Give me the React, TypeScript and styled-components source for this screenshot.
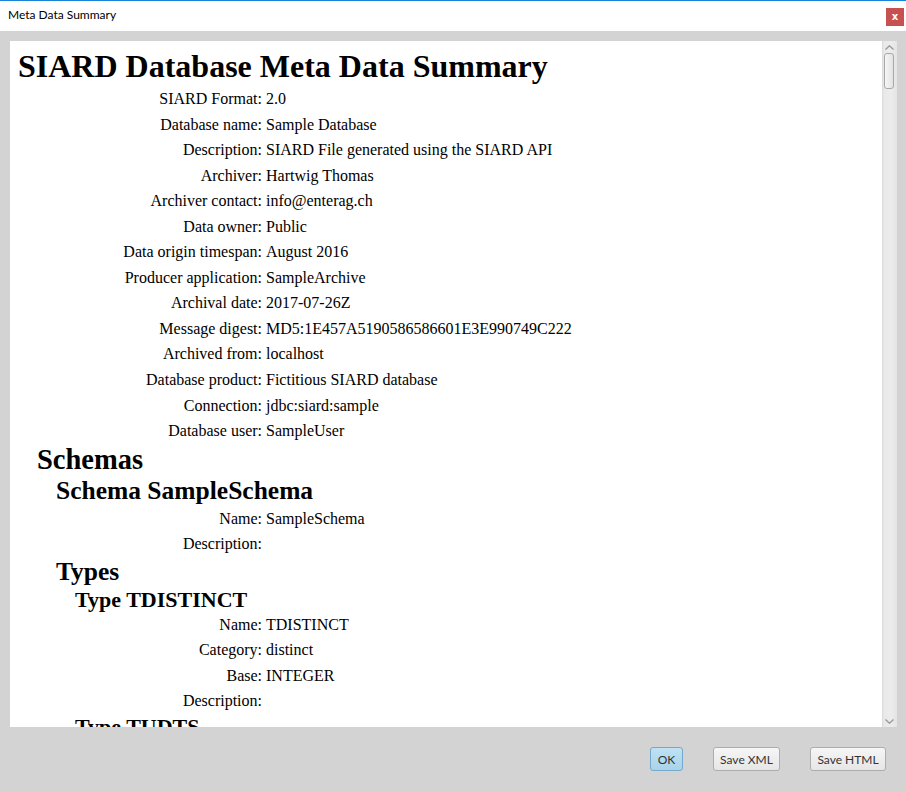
import React from "react";
import styled, { createGlobalStyle } from "styled-components";

const GlobalStyle = createGlobalStyle`
  html, body {
    margin: 0;
    padding: 0;
    width: 906px;
    height: 792px;
    overflow: hidden;
    background: #d3d3d3;
  }
  * { box-sizing: border-box; }
`;

const Window = styled.div`
  width: 906px;
  height: 792px;
  display: flex;
  flex-direction: column;
  background: #d3d3d3;
`;

const TitleBar = styled.div`
  height: 31px;
  flex: none;
  background: #ffffff;
  border-top: 1px solid #1883d7;
  display: flex;
  align-items: flex-start;
  padding: 0 2px 0 8px;
`;

const Title = styled.div`
  font-family: "Lato", "Segoe UI", sans-serif;
  font-size: 12px;
  line-height: 30px;
  color: #000;
  margin-top: -1px;
`;

const CloseButton = styled.div`
  margin-left: auto;
  margin-top: 7px;
  width: 18px;
  height: 18px;
  background: #c75050;
  color: #fff;
  font-family: "DejaVu Sans", sans-serif;
  font-weight: bold;
  font-size: 10px;
  line-height: 17px;
  text-align: center;
`;

const Body = styled.div`
  flex: 1;
  display: flex;
  flex-direction: column;
  padding: 10px 9px 0 10px;
`;

const ContentRow = styled.div`
  height: 686px;
  flex: none;
  display: flex;
`;

const Viewport = styled.div`
  flex: 1;
  background: #ffffff;
  overflow: hidden;
  padding: 5px 0 0 8px;
  font-family: "Liberation Serif", "Times New Roman", serif;
  color: #000;
`;

const Scrollbar = styled.div`
  width: 15px;
  flex: none;
  display: flex;
  flex-direction: column;
  background: linear-gradient(to right, #dadada 0, #e9e9e9 2px, #ececec 60%, #e4e4e4 100%);
`;

const ArrowBox = styled.div`
  height: 12px;
  flex: none;
  display: flex;
  align-items: center;
  justify-content: center;
  padding-right: 1px;
`;

const Thumb = styled.div`
  margin-left: 2px;
  width: 10px;
  height: 36px;
  border: 1px solid #a8a8a8;
  border-radius: 3px;
  background: linear-gradient(to right, #f6f6f6, #e2e2e2);
`;

const TrackFill = styled.div`
  flex: 1;
`;

type HeadingProps = { $level: number };

const sizes: Record<number, [number, number]> = {
  1: [32, 40],
  2: [28.5, 32],
  3: [25.5, 30],
  4: [22, 25],
};

const Heading = styled.div<HeadingProps>`
  font-weight: bold;
  font-size: ${(p) => sizes[p.$level][0]}px;
  line-height: ${(p) => sizes[p.$level][1]}px;
  margin-left: ${(p) => (p.$level - 1) * 19}px;
  white-space: nowrap;
`;

const PropTable = styled.div`
  display: grid;
  grid-template-columns: 244px 1fr;
  column-gap: 4px;
  font-size: 16px;
  line-height: 25.54px;
`;

const Label = styled.div`
  text-align: right;
  white-space: nowrap;
`;

const Value = styled.div`
  white-space: nowrap;
  min-height: 25.54px;
`;

const ButtonBar = styled.div`
  display: flex;
  justify-content: flex-end;
  gap: 30px;
  padding: 20px 11px 0 0;
`;

const Button = styled.div<{ $w: number; $default?: boolean }>`
  width: ${(p) => p.$w}px;
  height: 24px;
  border-radius: 3px;
  border: 1px solid ${(p) => (p.$default ? "#76a9cc" : "#adadad")};
  background: ${(p) =>
    p.$default
      ? "linear-gradient(#bfe1f3, #a9d3ea)"
      : "linear-gradient(#f6f6f6, #e6e6e6)"};
  font-family: "Lato", "Segoe UI", sans-serif;
  font-size: 12px;
  color: #333;
  display: flex;
  align-items: center;
  justify-content: center;
`;

const Chevron = ({ up }: { up: boolean }) => (
  <svg width="9" height="5" viewBox="0 0 9 5">
    <path
      d={up ? "M0.5 4.5 L4.5 0.8 L8.5 4.5" : "M0.5 0.5 L4.5 4.2 L8.5 0.5"}
      fill="none"
      stroke="#9a9a9a"
      strokeWidth="1.4"
    />
  </svg>
);

type Row = [string, string];

const archiveRows: Row[] = [
  ["SIARD Format:", "2.0"],
  ["Database name:", "Sample Database"],
  ["Description:", "SIARD File generated using the SIARD API"],
  ["Archiver:", "Hartwig Thomas"],
  ["Archiver contact:", "info@enterag.ch"],
  ["Data owner:", "Public"],
  ["Data origin timespan:", "August 2016"],
  ["Producer application:", "SampleArchive"],
  ["Archival date:", "2017-07-26Z"],
  ["Message digest:", "MD5:1E457A5190586586601E3E990749C222"],
  ["Archived from:", "localhost"],
  ["Database product:", "Fictitious SIARD database"],
  ["Connection:", "jdbc:siard:sample"],
  ["Database user:", "SampleUser"],
];

const schemaRows: Row[] = [
  ["Name:", "SampleSchema"],
  ["Description:", ""],
];

const typeRows: Row[] = [
  ["Name:", "TDISTINCT"],
  ["Category:", "distinct"],
  ["Base:", "INTEGER"],
  ["Description:", ""],
];

const Props = ({ rows }: { rows: Row[] }) => (
  <PropTable>
    {rows.map(([l, v], i) => (
      <React.Fragment key={i}>
        <Label>{l}</Label>
        <Value>{v}</Value>
      </React.Fragment>
    ))}
  </PropTable>
);

export default function App() {
  return (
    <>
      <GlobalStyle />
      <Window>
        <TitleBar>
          <Title>Meta Data Summary</Title>
          <CloseButton>x</CloseButton>
        </TitleBar>
        <Body>
          <ContentRow>
            <Viewport>
              <Heading $level={1}>SIARD Database Meta Data Summary</Heading>
              <Props rows={archiveRows} />
              <Heading $level={2}>Schemas</Heading>
              <Heading $level={3}>Schema SampleSchema</Heading>
              <Props rows={schemaRows} />
              <Heading $level={3}>Types</Heading>
              <Heading $level={4}>Type TDISTINCT</Heading>
              <Props rows={typeRows} />
              <Heading $level={4}>Type TUDTS</Heading>
            </Viewport>
            <Scrollbar>
              <ArrowBox>
                <Chevron up />
              </ArrowBox>
              <Thumb />
              <TrackFill />
              <ArrowBox>
                <Chevron up={false} />
              </ArrowBox>
            </Scrollbar>
          </ContentRow>
          <ButtonBar>
            <Button $w={33} $default>
              OK
            </Button>
            <Button $w={67}>Save XML</Button>
            <Button $w={76}>Save HTML</Button>
          </ButtonBar>
        </Body>
      </Window>
    </>
  );
}
